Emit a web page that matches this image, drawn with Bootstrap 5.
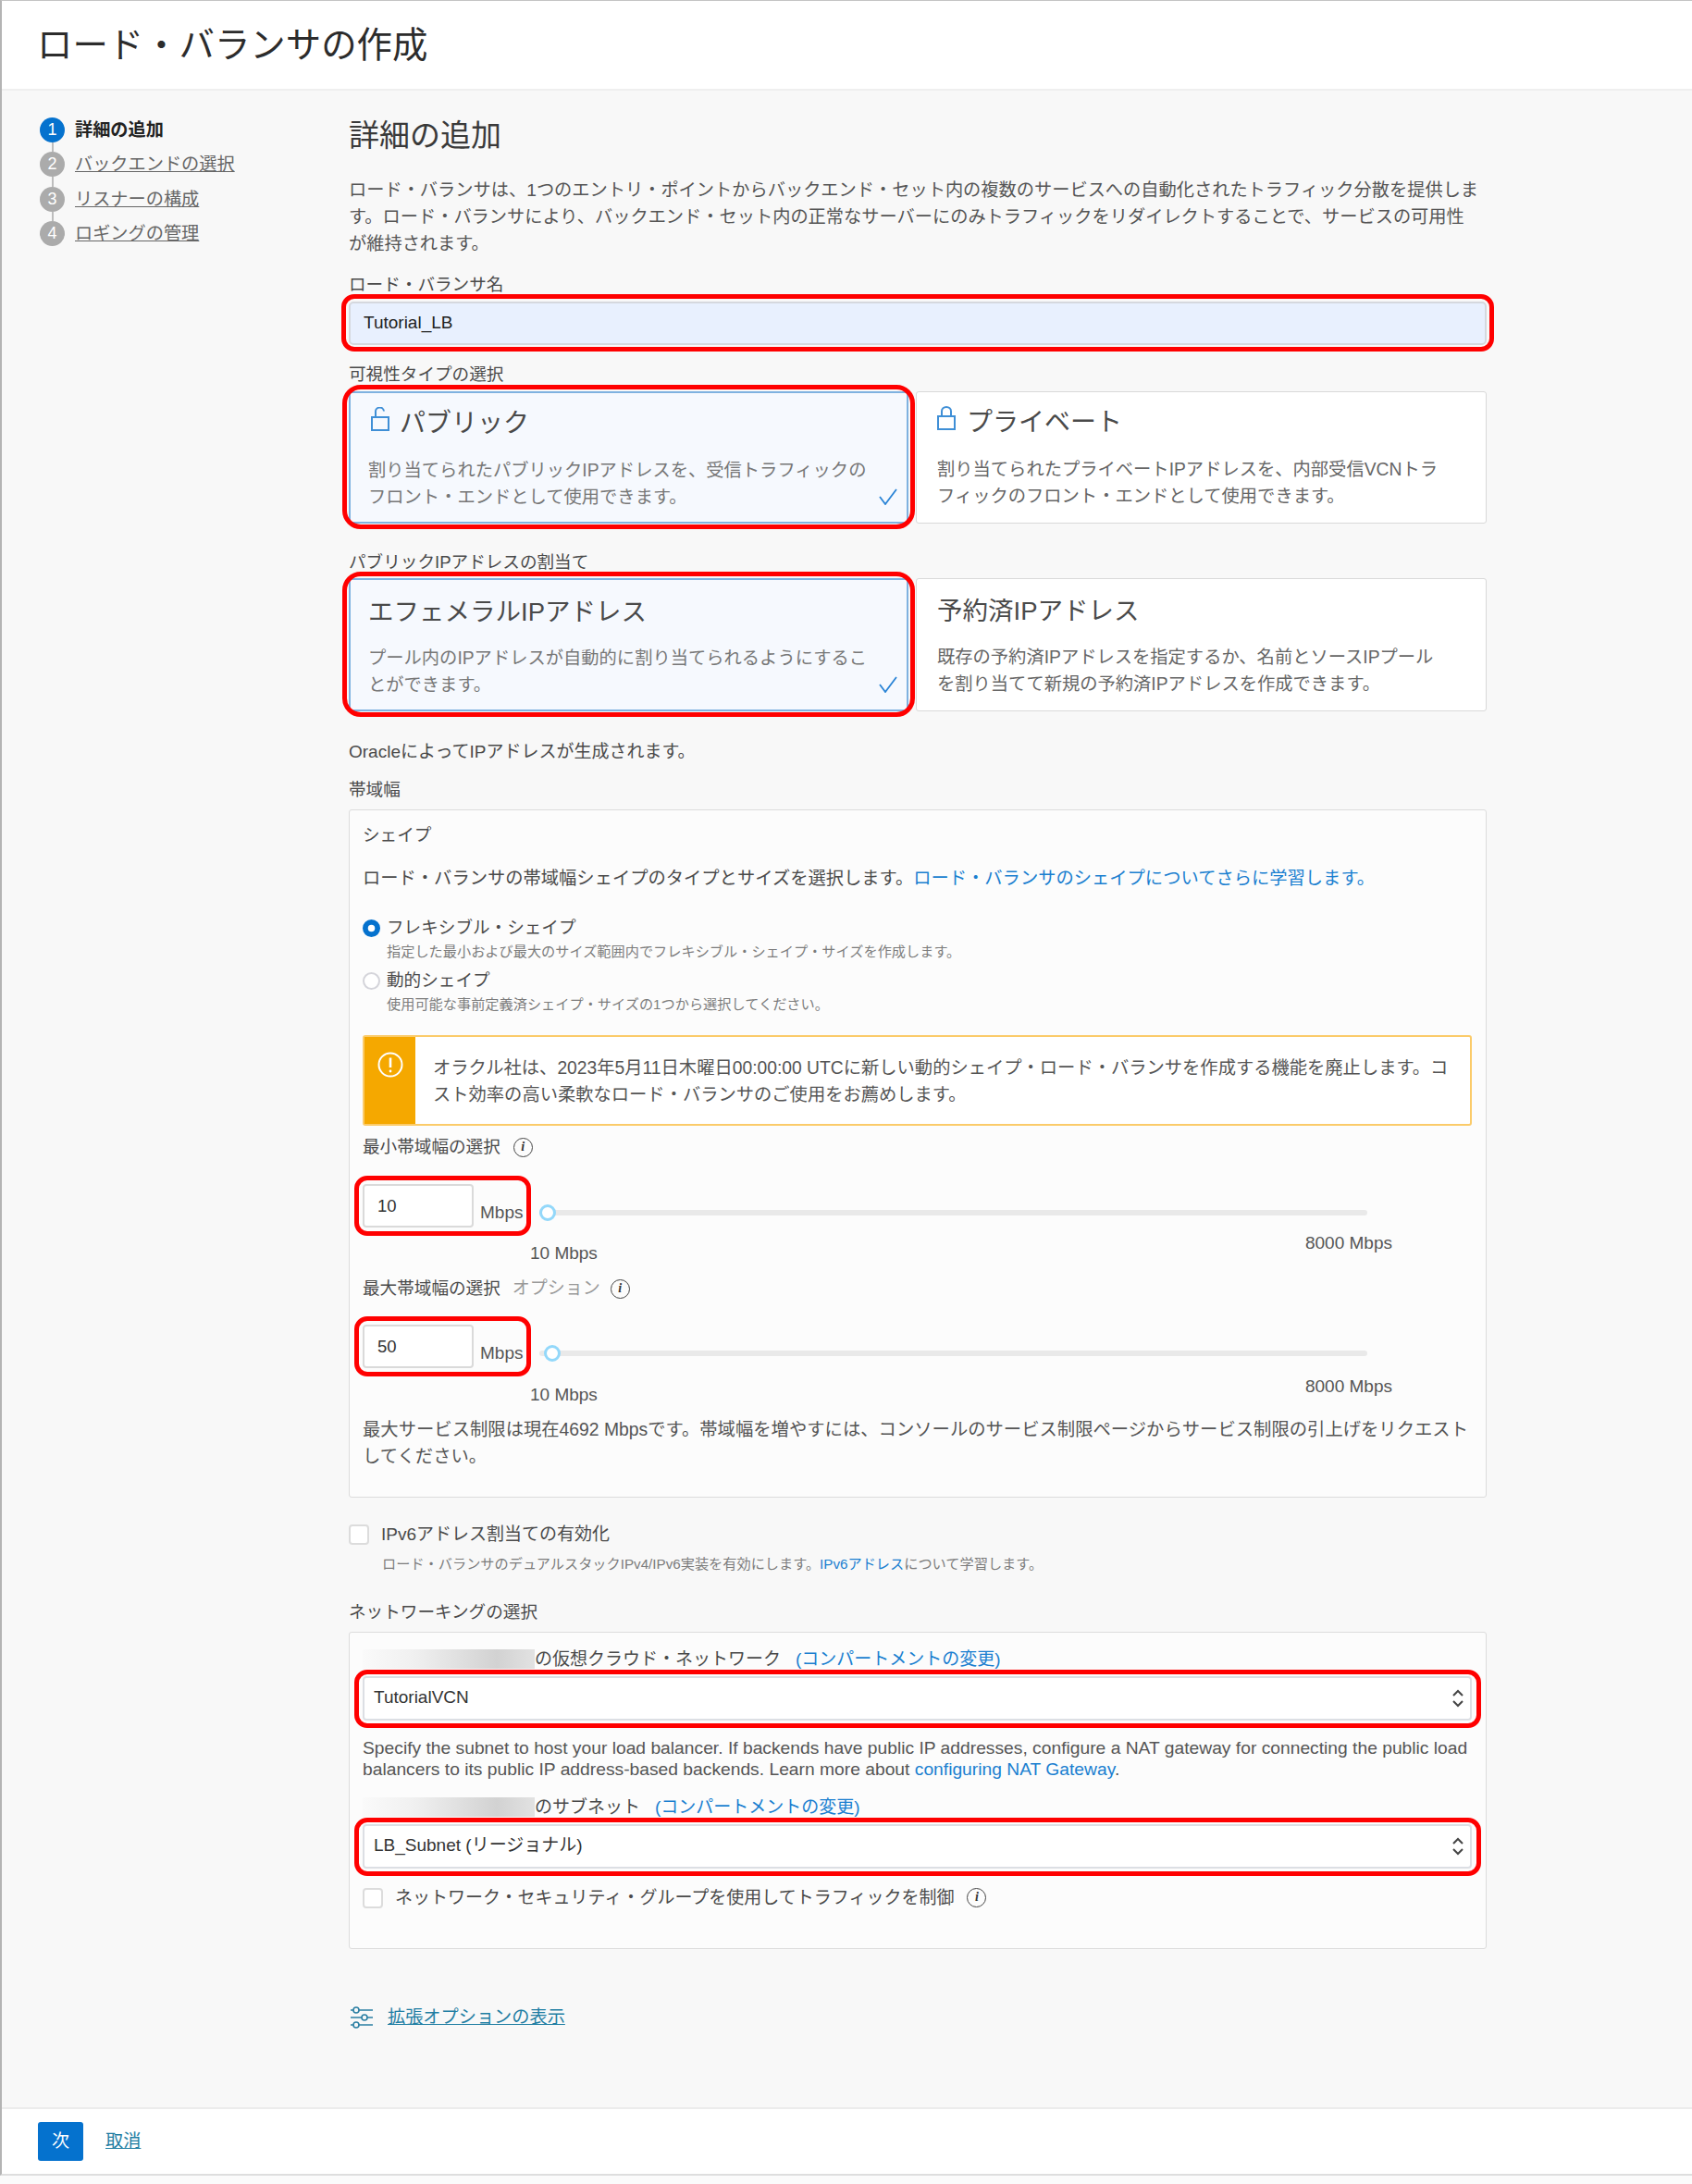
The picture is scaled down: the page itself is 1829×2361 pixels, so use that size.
<!DOCTYPE html>
<html lang="ja">
<head>
<meta charset="utf-8">
<title>ロード・バランサの作成</title>
<link href="https://cdn.jsdelivr.net/npm/bootstrap@5.3.0/dist/css/bootstrap.min.css" rel="stylesheet">
<style>
html,body{margin:0;background:#fbfbfb}
body{font-family:"Liberation Sans","Noto Sans CJK JP",sans-serif;font-size:19px;color:#555;line-height:24px}
.shell{height:2352px;border-left:2px solid #b4b4b4;border-top:1px solid #c4c4c4;border-bottom:2px solid #dedede;background:#f8f8f8}
.hdr{height:97px;background:#fff;border-bottom:2px solid #efefef;padding-left:38px}
.hdr h1{font-size:38.4px;font-weight:400;color:#2c2c2c;margin:0;line-height:50px}
.side{width:375px;padding:29px 0 0 41px;flex:none}
.stp{height:37.3px;gap:11px}
.dotcol{width:27px;flex:none}
.dot{width:27px;height:27px;border-radius:50%;background:#ababab;color:#fff;font-size:18px;line-height:27px;text-align:center;flex:none}
.dot.now{background:#0572ce}
.stem{width:2px;height:11px;background:#bdbdbd}
.steptxt{font-size:19.2px;line-height:27px;color:#666;text-decoration:underline}
.steptxt.now{font-weight:700;color:#222;text-decoration:none}
.mainc{width:1230px;flex:none}
.mainc h2{font-size:33px;font-weight:400;color:#3a3a3a;line-height:40px;margin:29px 0 0}
.para{line-height:29px;color:#555;font-size:19.23px;margin:0;white-space:nowrap}
.para.lim{font-size:19.33px}
.engl{font-size:19.25px;line-height:23px;color:#555;margin:0;white-space:nowrap}
.lb{line-height:24px;color:#4a4a4a;font-size:18.6px;white-space:nowrap}
.lb.big{font-size:19px}
.lb.desc{font-size:19.3px}
.m4{margin-top:4px}.m5{margin-top:5px}.m6{margin-top:6px}.m8{margin-top:8px}.m9{margin-top:9px}.m10{margin-top:10px}.m11{margin-top:11px}.m14{margin-top:14px}.m15{margin-top:15px}.m17{margin-top:17px}.m18{margin-top:18px}.m20{margin-top:20px}.m21{margin-top:21px}.m23{margin-top:23px}.m24{margin-top:24px}.m27{margin-top:27px}.m28{margin-top:28px}.m29{margin-top:29px}.m30{margin-top:30px}.m32{margin-top:32px}.m62{margin-top:62px}
.m105{margin-top:10.5px}.m175{margin-top:17.5px}.m185{margin-top:18.5px}
.rmark{position:relative}
.rmark::after{content:"";position:absolute;inset:-8px -8px -7px -8px;border:5px solid #f00;border-radius:14px;pointer-events:none}
.rmark.big::after{inset:-9px -9px -8px -9px;border-radius:20px}
.rmark.sel::after{inset:-7px -10px -8px -9px}
.rmark.num::after{inset:-9px -9px -9px -9px}
.namein.form-control{height:47px;background:#e8f0fe;border:2px solid #d5d8de;border-radius:5px;padding:0 14px 2px;font-size:19px;color:#222;box-shadow:none}
.tiles{gap:8px}
.tile{height:143px;background:#fff;border:1.5px solid #d9d9d9;border-radius:3px;padding:13px 20px 0 19px;position:relative}
.tile.off{padding-left:22px}
.tile.tall{height:144px;padding-top:15px}
.tile.on{background:#f6f9fe;border:2px solid #7fb2e0}
.w605{width:605px;flex:none}.w617{width:617px;flex:none}
.ttl{font-size:28px;line-height:40px;color:#4a4a4a}
.ttl.wic{margin-left:3px;gap:11px}
.tile.off .ttl.wic{margin-left:0;gap:12px}
.ttl svg{margin-top:-10px}
.tile.tall .ttl{font-size:27.5px}
.tdesc{line-height:29px;font-size:19.3px;color:#777;margin-top:15.5px;white-space:nowrap}
.tile.tall .tdesc{margin-top:14.5px}
.tile.off .tdesc{color:#666}
.tick{position:absolute;right:10px;bottom:18px}
.panel{background:#fcfcfc;border:1.5px solid #dcdcdc;border-radius:3px;padding:0 15px 0 14px}
.pa{padding-bottom:29px}.pb{padding-bottom:42px}
.pa a,.pb a,.tinyt a{color:#1a7fd0;text-decoration:none}
.opt{gap:7px}
.form-check-input.radi{width:19px;height:19px;margin:0;flex:none;border:2px solid #d4d4da;background-color:#fff}
.form-check-input.radi:checked{background-color:#0572ce;border-color:#0572ce}
.tinyt{font-size:15.2px;line-height:20px;color:#7c7c7c;white-space:nowrap}
.ind26{padding-left:26px}
.ind36{padding-left:36px}
.warn{height:98px;border:2px solid #fbcb6a;border-radius:3px;background:#fff}
.warnbar{width:55px;background:#f5a800;padding-top:16px}
.warntxt{padding:19px 0 0 19px;line-height:29px;font-size:19.3px;color:#555;white-space:nowrap}
.infoi{width:21px;height:21px;border:1.5px solid #444;border-radius:50%;font:italic 700 14px/18px "Liberation Serif",serif;color:#333;text-align:center;display:inline-block;flex:none}
.gap11{margin-left:11px}
.gap13{margin-left:13px}
.gap14{margin-left:14px}
.numrow{height:47px}
.numin.form-control{width:120px;height:47px;border:2px solid #dadada;border-radius:4px;padding:0 14px;background:#fff;font-size:18.5px;color:#333;box-shadow:none}
.mbps{font-size:19px;line-height:24px;padding:19px 0 0 7px;color:#555;white-space:nowrap}
.sldw{margin-left:18px;width:895px;padding-top:22px}
.form-range.slid{display:block;height:18px;padding:0;width:895px}
.slid::-webkit-slider-runnable-track{height:6px;background:#e9e9e9;border-radius:3px}
.slid::-webkit-slider-thumb{-webkit-appearance:none;appearance:none;width:18px;height:18px;margin-top:-6px;background:#fff;border:3px solid #93d8fa;border-radius:50%}
.scale{width:1113px;height:35px;padding-left:181px;color:#555;font-size:19px}
.scale.s2{height:33px}
.scale .lo{align-self:flex-end}
.ckbx.form-check-input{width:22px;height:22px;margin:0 13px 0 0;flex:none;border:2px solid #dcdcdc;border-radius:4px;background-color:#fff}
.mute{color:#999;font-size:19px}
.ph{display:inline-block;width:186px;height:21px;flex:none;background:linear-gradient(90deg,#fafafa,#f0f0f0 30%,#d2d2d2 78%,#e2e2e2)}
.sel2.form-select{height:48px;border:2px solid #dcdfe4;border-radius:4px;padding:0 30px 0 10px;font-size:19px;color:#333;background-color:#fff;box-shadow:none;background-size:12px 20px;background-position:right 7px center;background-image:url("data:image/svg+xml,%3Csvg xmlns='http://www.w3.org/2000/svg' viewBox='0 0 12 20'%3E%3Cpath d='M1 7l5-5 5 5M1 13l5 5 5-5' fill='none' stroke='%23444' stroke-width='2'/%3E%3C/svg%3E")}
.advlink,.cxl{color:#1f7ea3;text-decoration:underline;font-size:19.2px}
.adv{gap:16px;height:24px;padding-left:2px}
.foot{height:72px;background:#fff;border-top:2px solid #ececec;padding-left:39px;gap:24px}
.nextb.btn{width:49px;height:42px;padding:0;background:#0572ce;border:0;border-radius:3px;color:#fff;font-size:19px}
</style>
</head>
<body>
<div class="shell d-flex flex-column">
  <header class="hdr d-flex align-items-center flex-none"><h1>ロード・バランサの作成</h1></header>
  <div class="d-flex flex-grow-1">
    <nav class="side">
      <div class="d-flex stp"><div class="dotcol d-flex flex-column align-items-center"><div class="dot now">1</div><div class="stem"></div></div><div class="steptxt now">詳細の追加</div></div>
      <div class="d-flex stp"><div class="dotcol d-flex flex-column align-items-center"><div class="dot">2</div><div class="stem"></div></div><div class="steptxt">バックエンドの選択</div></div>
      <div class="d-flex stp"><div class="dotcol d-flex flex-column align-items-center"><div class="dot">3</div><div class="stem"></div></div><div class="steptxt">リスナーの構成</div></div>
      <div class="d-flex stp"><div class="dotcol d-flex flex-column align-items-center"><div class="dot">4</div></div><div class="steptxt">ロギングの管理</div></div>
    </nav>
    <main class="mainc">
      <h2>詳細の追加</h2>
      <p class="para m24">ロード・バランサは、1つのエントリ・ポイントからバックエンド・セット内の複数のサービスへの自動化されたトラフィック分散を提供しま<br>す。ロード・バランサにより、バックエンド・セット内の正常なサーバーにのみトラフィックをリダイレクトすることで、サービスの可用性<br>が維持されます。</p>

      <div class="lb m18">ロード・バランサ名</div>
      <div class="rmark m6"><input class="form-control namein" value="Tutorial_LB" aria-label="ロード・バランサ名"></div>

      <div class="lb m20">可視性タイプの選択</div>
      <div class="d-flex tiles m6">
        <div class="tile on w605 rmark big">
          <div class="ttl wic d-flex align-items-center">
            <svg width="20" height="26" viewBox="0 0 20 26" fill="none" stroke="#3f8fd6" stroke-width="2"><rect x="1" y="11" width="18" height="14"/><path d="M5 11V5.5a4.5 4.5 0 0 1 9 -1"/></svg>
            <span>パブリック</span>
          </div>
          <div class="tdesc">割り当てられたパブリックIPアドレスを、受信トラフィックの<br>フロント・エンドとして使用できます。</div>
          <svg class="tick" width="20" height="18" viewBox="0 0 20 18" fill="none" stroke="#2a84d6" stroke-width="1.8"><path d="M1 9l6 8L19 1"/></svg>
        </div>
        <div class="tile off w617">
          <div class="ttl wic d-flex align-items-center">
            <svg width="20" height="26" viewBox="0 0 20 26" fill="none" stroke="#3f8fd6" stroke-width="2"><rect x="1" y="11" width="18" height="14"/><path d="M5 11V5.5a5 4.5 0 0 1 10 0V11"/></svg>
            <span>プライベート</span>
          </div>
          <div class="tdesc">割り当てられたプライベートIPアドレスを、内部受信VCNトラ<br>フィックのフロント・エンドとして使用できます。</div>
        </div>
      </div>

      <div class="lb m30">パブリックIPアドレスの割当て</div>
      <div class="d-flex tiles m5">
        <div class="tile tall on w605 rmark big">
          <div class="ttl">エフェメラルIPアドレス</div>
          <div class="tdesc">プール内のIPアドレスが自動的に割り当てられるようにするこ<br>とができます。</div>
          <svg class="tick" width="20" height="18" viewBox="0 0 20 18" fill="none" stroke="#2a84d6" stroke-width="1.8"><path d="M1 9l6 8L19 1"/></svg>
        </div>
        <div class="tile tall off w617">
          <div class="ttl">予約済IPアドレス</div>
          <div class="tdesc">既存の予約済IPアドレスを指定するか、名前とソースIPプール<br>を割り当てて新規の予約済IPアドレスを作成できます。</div>
        </div>
      </div>

      <div class="lb big m32">OracleによってIPアドレスが生成されます。</div>
      <div class="lb m17">帯域幅</div>
      <section class="panel pa m9">
        <div class="lb m15">シェイプ</div>
        <div class="lb desc m23">ロード・バランサの帯域幅シェイプのタイプとサイズを選択します。<a href="#">ロード・バランサのシェイプについてさらに学習します。</a></div>
        <div class="d-flex align-items-center opt m29"><input class="form-check-input radi" type="radio" name="shp" checked aria-label="フレキシブル"><span class="lb">フレキシブル・シェイプ</span></div>
        <div class="tinyt ind26 m4">指定した最小および最大のサイズ範囲内でフレキシブル・シェイプ・サイズを作成します。</div>
        <div class="d-flex align-items-center opt m9"><input class="form-check-input radi" type="radio" name="shp" aria-label="動的"><span class="lb">動的シェイプ</span></div>
        <div class="tinyt ind26 m4">使用可能な事前定義済シェイプ・サイズの1つから選択してください。</div>
        <div class="warn d-flex m23">
          <div class="warnbar d-flex justify-content-center flex-none">
            <svg width="28" height="28" viewBox="0 0 28 28" fill="none" stroke="#fff" stroke-width="2"><circle cx="14" cy="14" r="12.5"/><path d="M14 6.5V17" stroke-width="2.6"/><circle cx="14" cy="21" r="1.4" fill="#fff" stroke="none"/></svg>
          </div>
          <div class="warntxt">オラクル社は、2023年5月11日木曜日00:00:00 UTCに新しい動的シェイプ・ロード・バランサを作成する機能を廃止します。コ<br>スト効率の高い柔軟なロード・バランサのご使用をお薦めします。</div>
        </div>
        <div class="lb d-flex align-items-center m11"><span>最小帯域幅の選択</span><span class="infoi gap14">i</span></div>
        <div class="d-flex numrow m28">
          <div class="d-flex rmark num"><input class="form-control numin" value="10" aria-label="最小帯域幅"><span class="mbps">Mbps</span></div>
          <div class="sldw"><input class="form-range slid" type="range" min="10" max="8000" value="10" aria-label="最小帯域幅スライダー"></div>
        </div>
        <div class="d-flex justify-content-between scale m5"><span class="lo">10 Mbps</span><span>8000 Mbps</span></div>
        <div class="lb d-flex align-items-center m14"><span>最大帯域幅の選択</span><span class="mute gap13">オプション</span><span class="infoi gap11">i</span></div>
        <div class="d-flex numrow m27">
          <div class="d-flex rmark num"><input class="form-control numin" value="50" aria-label="最大帯域幅"><span class="mbps">Mbps</span></div>
          <div class="sldw"><input class="form-range slid" type="range" min="10" max="8000" value="50" aria-label="最大帯域幅スライダー"></div>
        </div>
        <div class="d-flex justify-content-between scale s2 m8"><span class="lo">10 Mbps</span><span>8000 Mbps</span></div>
        <p class="para lim m105">最大サービス制限は現在4692 Mbpsです。帯域幅を増やすには、コンソールのサービス制限ページからサービス制限の引上げをリクエスト<br>してください。</p>
      </section>

      <div class="d-flex align-items-center m28 lb big"><input class="form-check-input ckbx" type="checkbox" aria-label="IPv6"><span>IPv6アドレス割当ての有効化</span></div>
      <div class="tinyt ind36 m10">ロード・バランサのデュアルスタックIPv4/IPv6実装を有効にします。<a href="#">IPv6アドレス</a>について学習します。</div>

      <div class="lb m30">ネットワーキングの選択</div>
      <section class="panel pb m9">
        <div class="lb big d-flex align-items-center m17"><span class="ph"></span><span>の仮想クラウド・ネットワーク</span><a class="ms-3" href="#">(コンパートメントの変更)</a></div>
        <div class="rmark sel m6"><select class="form-select sel2" aria-label="VCN"><option>TutorialVCN</option></select></div>
        <p class="engl m185">Specify the subnet to host your load balancer. If backends have public IP addresses, configure a NAT gateway for connecting the public load<br>balancers to its public IP address-based backends. Learn more about <a href="#">configuring NAT Gateway</a>.</p>
        <div class="lb big d-flex align-items-center m175"><span class="ph"></span><span>のサブネット</span><a class="ms-3" href="#">(コンパートメントの変更)</a></div>
        <div class="rmark sel m6"><select class="form-select sel2" aria-label="サブネット"><option>LB_Subnet (リージョナル)</option></select></div>
        <div class="lb big d-flex align-items-center m20"><input class="form-check-input ckbx" type="checkbox" aria-label="NSG"><span>ネットワーク・セキュリティ・グループを使用してトラフィックを制御</span><span class="infoi gap14">i</span></div>
      </section>

      <div class="d-flex align-items-center adv m62">
        <svg width="24" height="24" viewBox="0 0 24 24" fill="none" stroke="#2b7fa3" stroke-width="1.6"><path d="M0 4h3M9 4h15M0 12h12M18 12h6M0 20h3M9 20h15"/><circle cx="6" cy="4" r="3"/><circle cx="15" cy="12" r="3"/><circle cx="6" cy="20" r="3"/></svg>
        <a class="advlink" href="#">拡張オプションの表示</a>
      </div>
    </main>
  </div>
  <footer class="foot d-flex align-items-center">
    <button class="btn nextb" type="button">次</button>
    <a class="cxl" href="#">取消</a>
  </footer>
</div>
</body>
</html>
